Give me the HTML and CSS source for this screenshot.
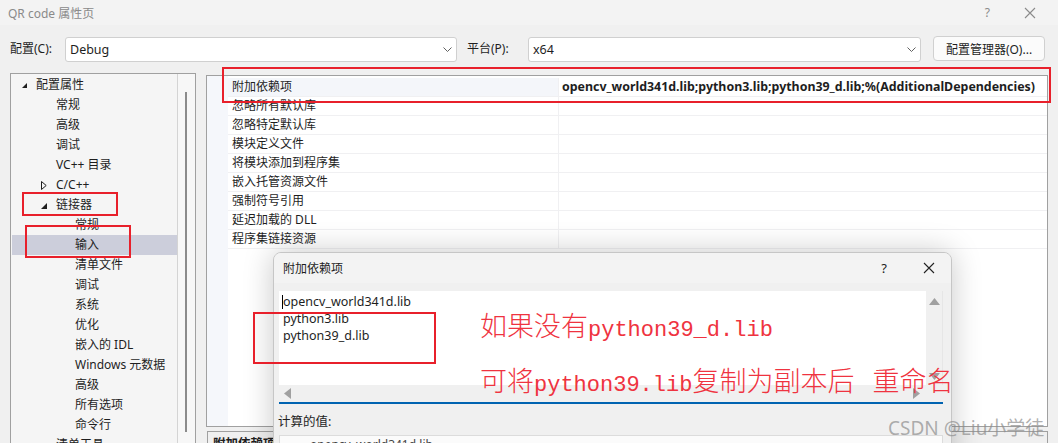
FILE: index.html
```html
<!DOCTYPE html>
<html lang="zh-CN">
<head>
<meta charset="utf-8">
<title>QR code 属性页</title>
<link rel="stylesheet" href="styles.css">
</head>
<body>
<div class="win">
  <div class="titlebar">
    <span class="title">QR code 属性页</span>
    <span class="tb-icons">
      <span class="tb-q">?</span>
      <svg class="tb-x" width="12" height="12" viewBox="0 0 12 12"><path d="M1 1L11 11M11 1L1 11" stroke="#8a8a8a" stroke-width="1.1" fill="none"/></svg>
    </span>
  </div>

  <div class="toolbar">
    <span class="lbl lbl1">配置(C):</span>
    <div class="combo combo1"><span>Debug</span><svg class="chev" width="9" height="5" viewBox="0 0 9 5"><path d="M0.5 0.5L4.5 4.5L8.5 0.5" stroke="#606060" fill="none"/></svg></div>
    <span class="lbl lbl2">平台(P):</span>
    <div class="combo combo2"><span>x64</span><svg class="chev" width="9" height="5" viewBox="0 0 9 5"><path d="M0.5 0.5L4.5 4.5L8.5 0.5" stroke="#606060" fill="none"/></svg></div>
    <div class="btn">配置管理器(O)...</div>
  </div>

  <div class="main">
    <div class="tree">
      <div class="tree-list">
        <div class="ti l0"><svg class="tri" width="5" height="5" viewBox="0 0 5 5"><path d="M5 0L5 5L0 5Z" fill="#1e1e1e"/></svg>配置属性</div>
        <div class="ti l1">常规</div>
        <div class="ti l1">高级</div>
        <div class="ti l1">调试</div>
        <div class="ti l1">VC++ 目录</div>
        <div class="ti l1"><svg class="tri-open" width="6" height="9" viewBox="0 0 6 9"><path d="M0.5 0.5L5.2 4.5L0.5 8.5Z" stroke="#1e1e1e" fill="none"/></svg>C/C++</div>
        <div class="ti l1"><svg class="tri-down" width="6" height="6" viewBox="0 0 6 6"><path d="M6 0L6 6L0 6Z" fill="#1e1e1e"/></svg>链接器</div>
        <div class="ti l2">常规</div>
        <div class="ti l2 sel">输入</div>
        <div class="ti l2">清单文件</div>
        <div class="ti l2">调试</div>
        <div class="ti l2">系统</div>
        <div class="ti l2">优化</div>
        <div class="ti l2">嵌入的 IDL</div>
        <div class="ti l2">Windows 元数据</div>
        <div class="ti l2">高级</div>
        <div class="ti l2">所有选项</div>
        <div class="ti l2">命令行</div>
        <div class="ti l1"><svg class="tri-down" width="6" height="6" viewBox="0 0 6 6"><path d="M6 0L6 6L0 6Z" fill="#1e1e1e"/></svg>清单工具</div>
      </div>
      <div class="vscroll"><div class="thumb"></div></div>
    </div>

    <div class="right">
      <div class="grid">
        <div class="gutter"></div>
        <div class="rows">
          <div class="row first"><div class="name">附加依赖项</div><div class="val">opencv_world341d.lib;python3.lib;python39_d.lib;%(AdditionalDependencies)</div></div>
          <div class="row"><div class="name">忽略所有默认库</div><div class="val"></div></div>
          <div class="row"><div class="name">忽略特定默认库</div><div class="val"></div></div>
          <div class="row"><div class="name">模块定义文件</div><div class="val"></div></div>
          <div class="row"><div class="name">将模块添加到程序集</div><div class="val"></div></div>
          <div class="row"><div class="name">嵌入托管资源文件</div><div class="val"></div></div>
          <div class="row"><div class="name">强制符号引用</div><div class="val"></div></div>
          <div class="row"><div class="name">延迟加载的 DLL</div><div class="val"></div></div>
          <div class="row"><div class="name">程序集链接资源</div><div class="val"></div></div>
        </div>
      </div>
      <div class="desc"><b>附加依赖项</b></div>
    </div>
  </div>
</div>

<div class="redbox rb1"></div>
<div class="redbox rb2"></div>
<div class="redbox rb3"></div>

<div class="dialog">
  <div class="dlg-title">
    <span>附加依赖项</span>
    <span class="dlg-icons">
      <span class="dlg-q">?</span>
      <svg width="12" height="12" viewBox="0 0 12 12"><path d="M1 1L11 11M11 1L1 11" stroke="#222" stroke-width="1.1" fill="none"/></svg>
    </span>
  </div>
  <div class="editor">
    <div class="ed-top">
      <div class="ed-text">
        <div class="ln"><span class="caret"></span>opencv_world341d.lib</div>
        <div class="ln">python3.lib</div>
        <div class="ln">python39_d.lib</div>
      </div>
      <div class="ed-vs">
        <svg width="11" height="7" viewBox="0 0 11 7"><path d="M5.5 0L11 7L0 7Z" fill="#a0a0a0"/></svg>
        <svg width="11" height="7" viewBox="0 0 11 7"><path d="M0 0L11 0L5.5 7Z" fill="#a0a0a0"/></svg>
      </div>
    </div>
    <div class="ed-hs">
      <svg width="7" height="11" viewBox="0 0 7 11"><path d="M7 0L7 11L0 5.5Z" fill="#a0a0a0"/></svg>
      <svg width="7" height="11" viewBox="0 0 7 11"><path d="M0 0L7 5.5L0 11Z" fill="#a0a0a0"/></svg>
    </div>
  </div>
  <div class="calc-lbl">计算的值:</div>
  <div class="calc-box"><span>opencv_world341d.lib</span></div>
</div>

<div class="redbox rb4"></div>

<div class="note">
  <div class="note-line">如果没有<span class="lat">python39_d.lib</span></div>
  <div class="note-line">可将<span class="lat">python39.lib</span>复制为副本后 重命名</div>
</div>

<div class="wm">CSDN @Liu小学徒</div>
</body>
</html>
```

FILE: styles.css
```css
* { box-sizing: border-box; }
html, body { margin: 0; padding: 0; }
body {
  width: 1058px;
  height: 443px;
  overflow: hidden;
  position: relative;
  background: #f0f0f0;
  font-family: "Noto Sans", "Noto Sans CJK SC", sans-serif;
  font-size: 12px;
  color: #1e1e1e;
}
.win { width: 1058px; height: 443px; overflow: hidden; }

.titlebar {
  height: 25px;
  background: #f3f3f3;
  display: flex;
  align-items: center;
  padding-left: 8px;
}
.title { color: #8a8a8a; font-size: 12px; }
.tb-icons { margin-left: auto; display: flex; align-items: center; padding-right: 22px; }
.tb-q { color: #8a8a8a; font-size: 12px; margin-right: 34px; }

.toolbar {
  display: flex;
  align-items: flex-start;
  padding: 12px 0 0 10px;
  height: 37px;
}
.lbl { height: 25px; line-height: 24px; }
.lbl1 { width: 55px; }
.lbl2 { width: 61px; margin-left: 10px; }
.combo {
  height: 25px;
  background: #fff;
  border: 1px solid #d0d0d0;
  border-radius: 3px;
  display: flex;
  align-items: center;
  padding-left: 4px;
  padding-right: 4px;
}
.combo span { font-size: 12.5px; }
.combo1 { width: 392px; }
.combo2 { width: 393px; }
.chev { margin-left: auto; }
.btn {
  margin-left: 12px;
  margin-top: -1px;
  width: 112px;
  height: 25px;
  border: 1px solid #d0d0d0;
  border-radius: 4px;
  background: #fbfbfb;
  display: flex;
  align-items: center;
  justify-content: center;
}

.main { display: flex; margin-top: 11px; }

.tree {
  margin-left: 10px;
  width: 186px;
  height: 380px;
  border: 1px solid #a0a0a0;
  background: #f5f5f5;
  display: flex;
}
.tree-list { width: 166px; padding-top: 1px; margin-left: 1px; }
.ti {
  height: 20px;
  line-height: 20px;
  white-space: nowrap;
  position: relative;
}
.l0 { padding-left: 24px; }
.l1 { padding-left: 44px; }
.l2 { padding-left: 63px; }
.tri { position: absolute; left: 10px; top: 8px; }
.tri-open { position: absolute; left: 29px; top: 6px; }
.tri-down { position: absolute; left: 29px; top: 8px; }
.sel { background: #cccedb; }
.vscroll {
  width: 18px;
  border-left: 1px solid #d4d4d4;
  background: #f7f7f7;
  position: relative;
}
.thumb {
  position: absolute;
  left: 7px;
  top: 18px;
  width: 2px;
  height: 340px;
  background: #8b8b8b;
}

.right { margin-left: 10px; margin-top: 2px; width: 842px; }
.grid {
  height: 352px;
  border: 1px solid #a0a0a0;
  background: #fff;
  display: flex;
}
.gutter { width: 21px; background: #f5f7fb; }
.rows { flex: 1; padding-top: 2px; }
.row {
  display: flex;
  height: 19px;
  border-bottom: 1px solid #f0f0f2;
}
.row .name { width: 330px; padding-left: 4px; line-height: 18px; white-space: nowrap; }
.row .val { flex: 1; border-left: 1px solid #f0f0f2; padding-left: 3px; line-height: 18px; white-space: nowrap; font-weight: 700; font-size: 12.4px; }
.row.first .name { background: #f4f6fa; }
.desc {
  margin-top: 4px;
  margin-left: 1px;
  height: 30px;
  border: 1px solid #a0a0a0;
  padding: 1px 5px;
}
.desc b { font-size: 12.5px; }

.redbox { position: absolute; border: 2px solid #e8202b; }
.rb1 { left: 22px; top: 192px; width: 96px; height: 24px; }
.rb2 { left: 25px; top: 225px; width: 106px; height: 33px; }
.rb3 { left: 222px; top: 67px; width: 829px; height: 36px; }
.rb4 { left: 253px; top: 312px; width: 183px; height: 52px; }

.dialog {
  position: absolute;
  left: 273px;
  top: 252px;
  width: 679px;
  height: 220px;
  background: #f0f0f0;
  border: 1px solid #c6c6c6;
  border-radius: 8px;
  box-shadow: 0 0 30px rgba(0,0,0,0.22);
  overflow: hidden;
}
.dlg-title {
  height: 30px;
  background: #f3f3f3;
  display: flex;
  align-items: center;
  padding-left: 9px;
}
.dlg-icons { margin-left: auto; display: flex; align-items: center; padding-right: 16px; }
.dlg-q { margin-right: 36px; font-size: 13px; color: #222; }
.editor {
  margin: 8px 0 0 5px;
  width: 664px;
  border-bottom: 2px solid #0063b1;
}
.ed-top { display: flex; height: 94px; }
.ed-text { flex: 1; background: #fff; padding: 2px 0 0 4px; font-size: 12.5px; }
.ln { height: 17px; line-height: 17px; position: relative; }
.caret { position: absolute; left: -1px; top: 2px; width: 1px; height: 14px; background: #000; }
.ed-vs {
  width: 17px;
  background: #f0f0f0;
  display: flex;
  flex-direction: column;
  align-items: center;
  justify-content: space-between;
  padding: 7px 0 5px;
  border-right: 1px solid #e6e6e6;
}
.ed-hs {
  height: 17px;
  width: 647px;
  background: #f0f0f0;
  display: flex;
  align-items: center;
  justify-content: space-between;
  padding: 0 6px 0 5px;
}
.calc-lbl { margin: 8px 0 0 4px; height: 20px; line-height: 20px; font-size: 12.5px; }
.calc-box {
  margin: 3px 0 0 5px;
  width: 664px;
  height: 30px;
  background: #fbfbfb;
  border: 1px solid #dcdcdc;
  padding-left: 30px;
  color: #444;
}

.note {
  position: absolute;
  left: 480px;
  top: 308px;
  color: #ef3340;
  font-family: "Noto Sans CJK SC", serif;
  font-size: 27px;
  font-weight: 300;
}
.note-line { height: 55px; line-height: 34px; white-space: nowrap; word-spacing: 12px; }
.lat { font-family: "Liberation Mono", monospace; font-size: 22px; }

.wm {
  position: absolute;
  left: 888px;
  top: 413px;
  font-size: 19px;
  color: rgba(140,140,140,0.7);
  white-space: nowrap;
}
```
